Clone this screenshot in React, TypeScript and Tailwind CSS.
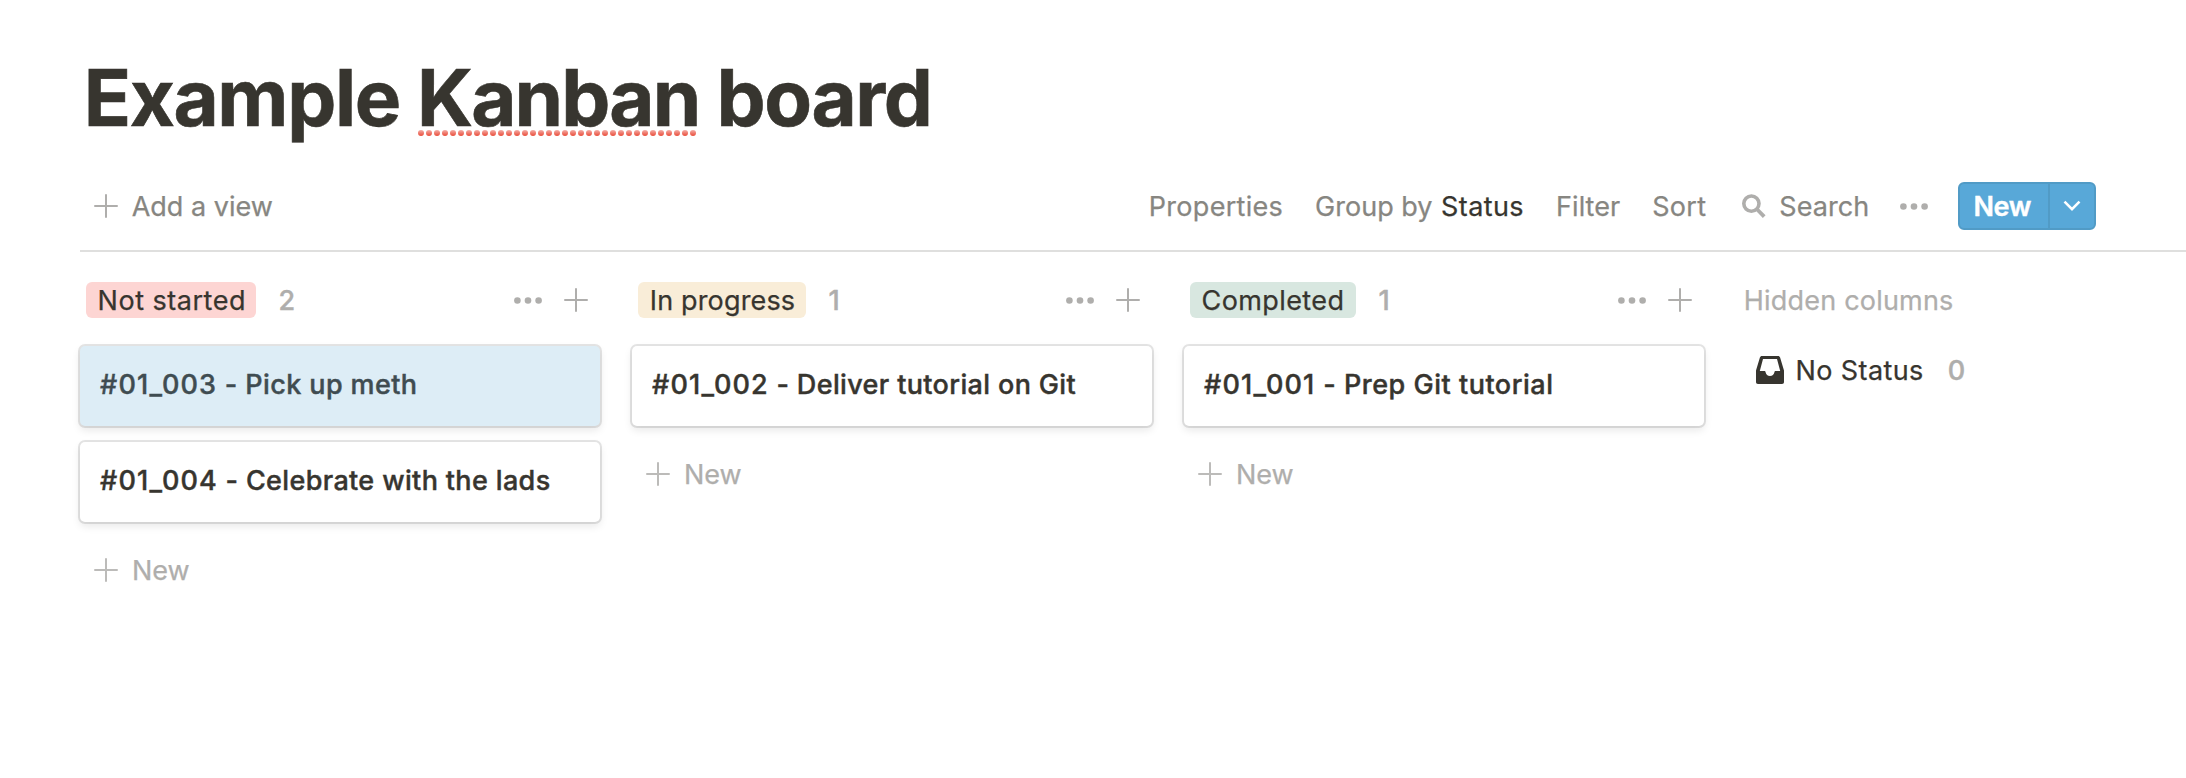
import type { ReactNode } from 'react';

function Plus({ className = '' }: { className?: string }) {
  return (
    <svg viewBox="0 0 24 24" className={`size-6 shrink-0 ${className}`} fill="none" stroke="currentColor" strokeWidth="2" strokeLinecap="round">
      <path d="M12 1v22M1 12h22" />
    </svg>
  );
}

function Dots() {
  return (
    <svg viewBox="0 0 28 7" className="h-[7px] w-7 shrink-0 fill-[#afaeac]">
      <circle cx="3.4" cy="3.5" r="3.3" />
      <circle cx="14" cy="3.5" r="3.3" />
      <circle cx="24.6" cy="3.5" r="3.3" />
    </svg>
  );
}

function SearchIcon() {
  return (
    <svg viewBox="0 0 24 24" className="size-6 shrink-0" fill="none" stroke="#afaeac">
      <circle cx="9.4" cy="9.6" r="7.6" strokeWidth="3.6" />
      <path d="M15 15.2l7.2 7.4" strokeWidth="3.8" />
    </svg>
  );
}

function InboxIcon() {
  return (
    <svg viewBox="0 0 28 28" className="size-7 shrink-0" fill="#37352f" fillRule="evenodd">
      <path d="M6 0h16c1.1 0 1.8.6 2.1 1.6L28 14.5V26c0 1.3-.7 2-2 2H2c-1.3 0-2-.7-2-2V14.5L3.900 1.600C4.200.600 4.900 0 6 0zM7 3L3.800 15h4.400c.9 0 1.300.5 1.400 1.200.4 2.300 2 3.900 4.400 3.900s4-1.600 4.400-3.900c.1-.7.500-1.200 1.400-1.200h4.400L21 3z" />
    </svg>
  );
}

function SpellingDots() {
  return (
    <svg className="absolute bottom-[10px] left-[1px] h-[6px] w-[280px]" aria-hidden="true">
      <defs>
        <linearGradient id="dotFill" x1="0" y1="0" x2="0" y2="1">
          <stop offset="0" stopColor="#f3aea8" />
          <stop offset="1" stopColor="#ea4b38" />
        </linearGradient>
        <pattern id="dotRow" width="8" height="6" patternUnits="userSpaceOnUse">
          <circle cx="3" cy="3" r="3" fill="url(#dotFill)" />
        </pattern>
      </defs>
      <rect width="280" height="6" fill="url(#dotRow)" />
    </svg>
  );
}

function Card({ id, children, selected = false, spacing }: { id: string; children: string; selected?: boolean; spacing: string }) {
  return (
    <div
      className={`flex h-20 items-center rounded-[5px] pb-0.5 pl-5 font-medium whitespace-pre shadow-[0_0_0_2px_rgba(15,15,15,0.11),0_4px_8px_rgba(15,15,15,0.1)] [-webkit-text-stroke:0.4px_currentColor] ${
        selected ? 'bg-[#ddedf6] text-[#3f4c51]' : 'bg-white text-[#37352f]'
      }`}
    >
      <span className="tracking-[1.15px]">{id}</span>
      <span className={spacing}>{` - ${children}`}</span>
    </div>
  );
}

function Column({ label, tagClass, count, children }: { label: string; tagClass: string; count: number; children: ReactNode }) {
  return (
    <section className="w-[520px]">
      <header className="flex h-9 items-center pr-3 pl-1.5">
        <span className={`flex h-9 items-center rounded-[6px] pt-0.5 text-[#37352f] ${tagClass}`}>{label}</span>
        <span className="ml-[22.500px] pt-0.5 font-medium text-[#afaeac] [-webkit-text-stroke:0.4px_currentColor]">{count}</span>
        <div className="ml-auto flex items-center gap-[22px]">
          <Dots />
          <Plus className="text-[#afaeac]" />
        </div>
      </header>
      <div className="mt-7 flex flex-col gap-4">{children}</div>
      <div className="mt-[30px] flex h-9 items-center gap-[14px] pl-3.5 text-[#afaeac]">
        <Plus className="text-[#bcbbb9]" />
        <span className="pt-0.5 tracking-[-0.1px]">New</span>
      </div>
    </section>
  );
}

export default function App() {
  return (
    <main className="h-[778px] overflow-hidden bg-white pt-[50px] pl-20 font-['Inter',sans-serif] text-[27px] leading-9 [-webkit-text-stroke:0.25px_currentColor]">
      <h1 className="pl-[3.700px] text-[78px] leading-[96px] font-bold tracking-[-1.37px] whitespace-nowrap text-[#37352f] [-webkit-text-stroke:0.6px_currentColor]">
        Example{' '}
        <span className="relative inline-block tracking-[-1.89px]">
          Kanban
          <SpellingDots />
        </span>{' '}
        board
      </h1>

      <div className="mt-9 flex h-[70px] items-start justify-between border-b-2 border-[#dfdfde] pr-[90px] pl-3.5 text-[#878681]">
        <div className="flex h-12 items-center gap-[13.700px]">
          <Plus className="text-[#afaeac]" />
          <span className="pt-0.5 tracking-[0px]">Add a view</span>
        </div>
        <div className="flex h-12 items-center whitespace-nowrap">
          <span className="pt-0.5 tracking-[0.29px]">Properties</span>
          <span className="ml-8 pt-0.5 tracking-[0.02px]">Group by</span>
          <span className="ml-[8.500px] pt-0.5 tracking-[0.41px] text-[#37352f]">Status</span>
          <span className="ml-8 pt-0.5 tracking-[0.06px]">Filter</span>
          <span className="ml-8 pt-0.5 tracking-[0.27px]">Sort</span>
          <div className="ml-[35.700px] flex items-center gap-[13.300px]">
            <SearchIcon />
            <span className="pt-0.5 tracking-[0.07px]">Search</span>
          </div>
          <div className="ml-[30.700px]">
            <Dots />
          </div>
          <div className="ml-[30px] flex h-12 w-[138px] overflow-hidden rounded-[6px] border-2 border-[#519bc6] bg-[#58a8d8] text-white">
            <span className="flex w-[90px] items-center border-r-2 border-[#519bc6] pt-0.5 pl-[13.600px] font-semibold tracking-[-0.48px] [-webkit-text-stroke:0.4px_currentColor]">New</span>
            <span className="flex flex-1 items-center justify-center">
              <svg viewBox="0 0 18 12" className="h-3 w-[18px]" fill="none" stroke="currentColor" strokeWidth="2.6">
                <path d="M1.500 1.700L9 9.200l7.500-7.500" />
              </svg>
            </span>
          </div>
        </div>
      </div>

      <div className="mt-[30px] flex gap-8">
        <Column label="Not started" count={2} tagClass="w-[170px] bg-[#fdd5d3] pl-[11.600px] tracking-[0.51px]">
          <Card id="#01_003" selected spacing="tracking-[0.4px]">Pick up meth</Card>
          <Card id="#01_004" spacing="tracking-[0.36px]">Celebrate with the lads</Card>
        </Column>
        <Column label="In progress" count={1} tagClass="w-[168px] bg-[#f9edd8] pl-[11.800px] tracking-[0.15px]">
          <Card id="#01_002" spacing="tracking-[0.36px]">Deliver tutorial on Git</Card>
        </Column>
        <Column label="Completed" count={1} tagClass="w-[166px] bg-[#d8e7e0] pl-[11.500px] tracking-[0.41px]">
          <Card id="#01_001" spacing="tracking-[0.52px]">Prep Git tutorial</Card>
        </Column>
        <section>
          <header className="h-9 pt-px pl-[7.800px] tracking-[0.2px] text-[#afaeac]">Hidden columns</header>
          <div className="mt-[34px] flex h-9 items-center pl-5 text-[#37352f]">
            <InboxIcon />
            <span className="ml-[11.600px] pt-0.5 tracking-[0.38px]">No Status</span>
            <span className="ml-6 pt-0.5 font-medium text-[#afaeac] [-webkit-text-stroke:0.4px_currentColor]">0</span>
          </div>
        </section>
      </div>
    </main>
  );
}
